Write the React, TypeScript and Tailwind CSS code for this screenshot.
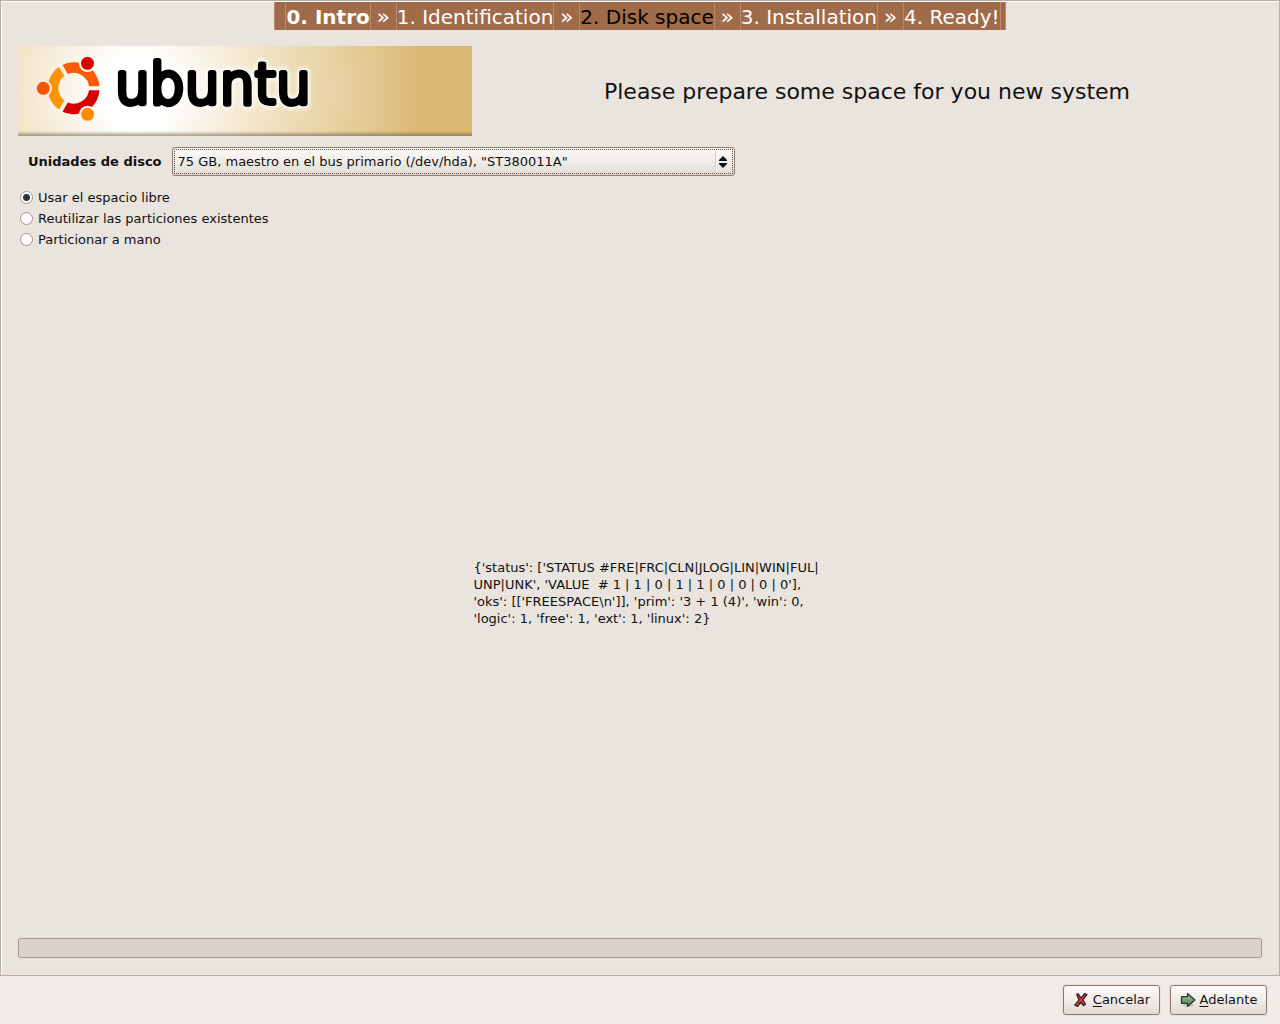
import { Fragment, useState } from 'react'

const steps = [
  { label: '0. Intro', style: 'font-bold text-white' },
  { label: '1. Identification', style: 'text-white' },
  { label: '2. Disk space', style: 'text-black' },
  { label: '3. Installation', style: 'text-white' },
  { label: '4. Ready!', style: 'text-white' },
]

const options = ['Usar el espacio libre', 'Reutilizar las particiones existentes', 'Particionar a mano']

const status = `{'status': ['STATUS #FRE|FRC|CLN|JLOG|LIN|WIN|FUL|
UNP|UNK', 'VALUE  # 1 | 1 | 0 | 1 | 1 | 0 | 0 | 0 | 0'],
'oks': [['FREESPACE\\n']], 'prim': '3 + 1 (4)', 'win': 0,
'logic': 1, 'free': 1, 'ext': 1, 'linux': 2}`

function Steps() {
  return (
    <nav className="flex justify-center">
      <ol className="flex h-7 items-stretch border-x border-[#b88a6c] bg-[#9f6b49] pr-1 pl-2.5 text-[20px] leading-[30px] whitespace-nowrap">
        {steps.map((step, i) => (
          <Fragment key={step.label}>
            {i > 0 && (
              <li aria-hidden="true" className="w-[25px] text-center text-[22px] text-white">
                »
              </li>
            )}
            <li className={`border-x border-[#b58a6d] ${step.style}`}>{step.label}</li>
          </Fragment>
        ))}
      </ol>
    </nav>
  )
}

function Banner() {
  return (
    <svg viewBox="0 0 454 90" className="h-[90px] w-[454px] shrink-0" role="img" aria-label="ubuntu">
      <defs>
        <radialGradient id="sky" gradientUnits="userSpaceOnUse" cx="120" cy="45" r="282">
          <stop offset="0" stopColor="#ffffff" />
          <stop offset="0.12" stopColor="#ffffff" />
          <stop offset="0.42" stopColor="#f2e5cb" />
          <stop offset="0.72" stopColor="#e7d1a0" />
          <stop offset="1" stopColor="#dbb975" />
        </radialGradient>
        <linearGradient id="edge" x1="0" y1="0" x2="0" y2="1">
          <stop offset="0" stopColor="#6b5a3c" stopOpacity="0" />
          <stop offset="1" stopColor="#5f5036" stopOpacity="0.55" />
        </linearGradient>
        <filter id="glow" x="-10%" y="-30%" width="120%" height="160%">
          <feGaussianBlur stdDeviation="2" />
        </filter>
        <mask id="gaps" maskUnits="userSpaceOnUse" x="0" y="0" width="110" height="90">
          <rect width="110" height="90" fill="#fff" />
          <g stroke="#000" strokeWidth="4">
            <path d="M55.7 42.3H90M55.7 42.3L38.7 12.9M55.7 42.3L38.7 71.7" />
          </g>
          <circle cx="25.3" cy="42.3" r="8.6" />
          <circle cx="69.5" cy="17.3" r="8.6" />
          <circle cx="69.6" cy="68.3" r="8.6" />
        </mask>
      </defs>
      <rect width="454" height="90" fill="url(#sky)" />
      <rect y="85" width="454" height="5" fill="url(#edge)" />
      <g mask="url(#gaps)" fill="none" strokeWidth="10.6">
        <path stroke="#fb5b05" d="M76.4 42.3A20.7 20.7 0 0 0 45.35 24.4" />
        <path stroke="#ff9305" d="M45.35 24.4A20.7 20.7 0 0 0 45.35 60.2" />
        <path stroke="#d90000" d="M45.35 60.2A20.7 20.7 0 0 0 76.4 42.3" />
      </g>
      <circle cx="25.3" cy="42.3" r="6.5" fill="#f75305" />
      <circle cx="69.5" cy="17.3" r="6.5" fill="#dc0000" />
      <circle cx="69.6" cy="68.3" r="6.5" fill="#ff8b05" />
      <g fontSize="55" fontWeight="200" fontFamily="'DejaVu Sans Light', 'DejaVu Sans', sans-serif" strokeLinejoin="round">
        <text x="97" y="57" fill="#fff" stroke="#fff" strokeWidth="10" opacity="0.9" filter="url(#glow)" aria-hidden="true">
          ubuntu
        </text>
        <text x="97" y="57" fill="#000" stroke="#000" strokeWidth="6">
          ubuntu
        </text>
      </g>
    </svg>
  )
}

function CancelIcon() {
  return (
    <svg viewBox="0 0 16 16" className="size-4" aria-hidden="true">
      <path
        d="M3.6 2.2 5.3 1.7 8 6 11.6 1.6 14 2.6 9.8 7.8 12.6 12.2 10.4 13.6 7.6 10.4 4.6 14.4 1.6 13 6 8Z"
        fill="#c14149"
        stroke="#301014"
        strokeWidth="1.1"
        strokeLinejoin="round"
      />
    </svg>
  )
}

function ForwardIcon() {
  return (
    <svg viewBox="0 0 16 16" className="size-4" aria-hidden="true">
      <defs>
        <linearGradient id="leaf" x1="0" y1="0" x2="0" y2="1">
          <stop offset="0" stopColor="#9fc09a" />
          <stop offset="1" stopColor="#4f7d4d" />
        </linearGradient>
      </defs>
      <ellipse cx="8.5" cy="13.2" rx="5.5" ry="1.6" fill="#000" opacity="0.12" />
      <path d="M1.5 4.6H7.5V1.5L14.9 8 7.5 14.4V11.4H1.5Z" fill="url(#leaf)" stroke="#2b3b2c" strokeWidth="1.3" strokeLinejoin="round" />
    </svg>
  )
}

const buttonStyle =
  'flex h-[30px] w-[97px] items-center justify-center gap-1 rounded-[3px] border border-[#8b7b6f] bg-linear-to-b from-[#fbfaf8] via-[#f0ece8] to-[#e2dbd4] shadow-[0_0_0_1px_#e6e1db]'

export default function App() {
  const [choice, setChoice] = useState(0)
  return (
    <div className="flex min-h-screen flex-col bg-[#efebe6] font-['DejaVu_Sans',sans-serif] text-[13px] text-[#111]">
      <main className="flex flex-1 flex-col border border-[#b9aca0] bg-[#e9e4dd] shadow-[inset_1px_1px_0_#fff]">
        <div className="pt-px">
          <Steps />
        </div>
        <div className="flex flex-1 flex-col px-[17px] pt-4 pb-[17px]">
          <header className="flex items-center">
            <Banner />
            <h1 className="flex-1 text-center text-[22px]">Please prepare some space for you new system</h1>
          </header>

          <div className="mt-[11px] flex items-center gap-2.5 pl-2.5">
            <label htmlFor="disk" className="font-bold">
              Unidades de disco
            </label>
            <div className="relative w-[563px]">
              <select
                id="disk"
                className="block h-[29px] w-full appearance-none rounded-[3px] border border-[#8b7b6f] bg-linear-to-b from-[#fbfaf8] via-[#f0ece8] to-[#e2dbd4] pr-6 pl-[5px] outline-1 -outline-offset-3 outline-dotted outline-[#5d5048]"
              >
                <option>75 GB, maestro en el bus primario (/dev/hda), "ST380011A"</option>
              </select>
              <span className="pointer-events-none absolute inset-y-1 right-1 flex w-4 items-center justify-center border-l border-[#cfc8c0] shadow-[inset_1px_0_0_#fff]">
                <svg viewBox="0 0 8 12" className="h-3 w-2" aria-hidden="true">
                  <path d="M4 0 8 4V5H0V4ZM4 12 8 8V7H0V8Z" fill="#111" />
                </svg>
              </span>
            </div>
          </div>

          <fieldset className="mt-[11px] flex flex-col items-start">
            {options.map((option, i) => (
              <label key={option} className="flex h-[21px] items-center gap-[5px] pl-0.5">
                <input
                  type="radio"
                  name="method"
                  checked={choice === i}
                  onChange={() => setChoice(i)}
                  className="m-0 size-[13px] appearance-none rounded-full border border-[#a2958a] bg-white checked:bg-[radial-gradient(circle,#2b3239_0_3px,#fff_4px)]"
                />
                {option}
              </label>
            ))}
          </fieldset>

          <div className="flex flex-1 items-center justify-center pb-0.5 pl-3">
            <p className="leading-[17px] whitespace-pre">{status}</p>
          </div>

          <div
            role="progressbar"
            aria-label="Progreso"
            aria-valuenow={0}
            className="h-5 rounded-[2px] border border-[#ab9b8e] bg-[#dad1cb]"
          />
        </div>
      </main>

      <footer className="flex h-12 items-center justify-end gap-2.5 px-[13px]">
        <button type="button" className={buttonStyle}>
          <CancelIcon />
          <span>
            <u className="underline-offset-2">C</u>ancelar
          </span>
        </button>
        <button type="button" className={buttonStyle}>
          <ForwardIcon />
          <span>
            <u className="underline-offset-2">A</u>delante
          </span>
        </button>
      </footer>
    </div>
  )
}
